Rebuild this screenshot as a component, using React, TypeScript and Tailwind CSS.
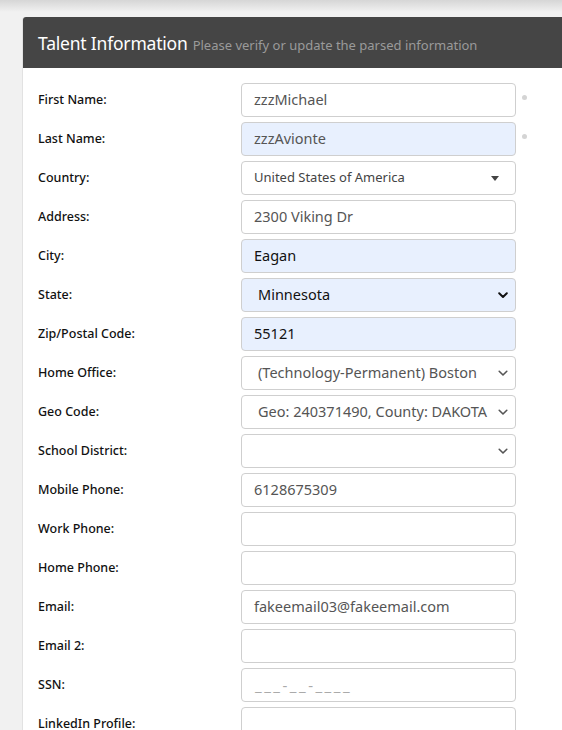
import React from 'react';

type Field = {
  label: string;
  value?: string;
  kind?: 'input' | 'select' | 'combo' | 'mask';
  filled?: boolean;
  required?: boolean;
  dark?: boolean;
};

const fields: Field[] = [
  { label: 'First Name:', value: 'zzzMichael', required: true },
  { label: 'Last Name:', value: 'zzzAvionte', filled: true, required: true },
  { label: 'Country:', value: 'United States of America', kind: 'combo' },
  { label: 'Address:', value: '2300 Viking Dr' },
  { label: 'City:', value: 'Eagan', filled: true, dark: true },
  { label: 'State:', value: 'Minnesota', kind: 'select', filled: true, dark: true },
  { label: 'Zip/Postal Code:', value: '55121', filled: true, dark: true },
  { label: 'Home Office:', value: '(Technology-Permanent) Boston', kind: 'select' },
  { label: 'Geo Code:', value: 'Geo: 240371490, County: DAKOTA', kind: 'select' },
  { label: 'School District:', value: '', kind: 'select' },
  { label: 'Mobile Phone:', value: '6128675309' },
  { label: 'Work Phone:', value: '' },
  { label: 'Home Phone:', value: '' },
  { label: 'Email:', value: 'fakeemail03@fakeemail.com' },
  { label: 'Email 2:', value: '' },
  { label: 'SSN:', kind: 'mask' },
  { label: 'LinkedIn Profile:', value: '' },
];

const Chevron = ({ dark }: { dark?: boolean }) => (
  <svg width="10" height="7" viewBox="0 0 10 7" className="shrink-0">
    <path
      d="M1.2 1.3 L5 5 L8.8 1.3"
      fill="none"
      stroke={dark ? '#111' : '#555'}
      strokeWidth={dark ? 2 : 1.6}
      strokeLinecap="round"
      strokeLinejoin="round"
    />
  </svg>
);

const Control = ({ f }: { f: Field }) => {
  const box = `h-[34px] w-[275px] shrink-0 rounded-[4px] border border-[#cfcfcf] flex items-center overflow-hidden ${
    f.filled ? 'bg-[#e8f0fe]' : 'bg-white'
  }`;
  const color = f.dark ? 'text-[#111]' : 'text-[#555]';

  if (f.kind === 'combo') {
    return (
      <div className={`${box} pl-3 pr-[16px] justify-between`}>
        <span className="text-[13px] text-[#444] whitespace-nowrap">{f.value}</span>
        <span className="w-0 h-0 border-l-[4px] border-r-[4px] border-t-[5px] border-l-transparent border-r-transparent border-t-[#444]" />
      </div>
    );
  }
  if (f.kind === 'select') {
    return (
      <div className={`${box} pl-4 pr-[6px] justify-between`}>
        <span className={`text-[14.5px] ${color} whitespace-nowrap overflow-hidden flex-1`}>{f.value}</span>
        <span className="pl-2 pr-[1px]">
          <Chevron dark={f.dark} />
        </span>
      </div>
    );
  }
  if (f.kind === 'mask') {
    return (
      <div className={`${box} pl-[13px]`}>
        <span className="text-[15px] text-[#aaa] tracking-[2.5px]">___-__-____</span>
      </div>
    );
  }
  return (
    <div className={`${box} pl-3`}>
      <span className={`text-[14.5px] ${color} whitespace-nowrap`}>{f.value}</span>
    </div>
  );
};

export default function App() {
  return (
    <div
      className="w-[562px] h-[730px] overflow-hidden bg-[#f1f1f1] relative"
      style={{ fontFamily: '"Noto Sans", Inter, sans-serif' }}
    >
      {/* top shadow */}
      <div className="absolute top-0 left-0 right-0 h-[12px] bg-gradient-to-b from-[#d6d6d6] to-[#f1f1f1]" />
      <div className="relative pt-[17px] pl-[22px]">
        <div className="w-[560px] bg-white rounded-tl-[3px] border-l border-[#e2e2e2]">
          <div className="h-[51px] bg-[#454545] rounded-tl-[3px] flex items-baseline pl-[15px] pt-[13px]">
            <span className="text-[17.5px] text-white tracking-[-0.2px]">Talent Information</span>
            <span className="ml-[5px] text-[13px] text-[#9a9a9a]">Please verify or update the parsed information</span>
          </div>
          <div className="pt-[15px] pl-[15px] flex flex-col gap-[5px]">
            {fields.map((f) => (
              <div key={f.label} className="flex items-center">
                <label className="w-[203px] shrink-0 text-[12.5px] font-medium text-[#111]">{f.label}</label>
                <Control f={f} />
                {f.required && <span className="ml-[6px] mb-[6px] w-[5px] h-[5px] rounded-full bg-[#d4d4d4]" />}
              </div>
            ))}
          </div>
        </div>
      </div>
    </div>
  );
}
